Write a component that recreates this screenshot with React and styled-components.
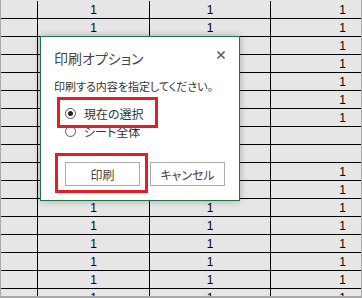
import React from "react";
import styled, { createGlobalStyle } from "styled-components";

const GlobalStyle = createGlobalStyle`
  html, body { margin: 0; padding: 0; background: #fff; }
  body { font-family: "Noto Sans CJK JP", "Noto Sans", sans-serif; }
`;

const Frame = styled.div`
  position: relative;
  width: 362px;
  height: 298px;
  box-sizing: border-box;
  border-left: 1px solid #a8a8a8;
  border-right: 1px solid #a8a8a8;
  border-bottom: 2px solid #a8a8a8;
  background: #e6e6e6;
  overflow: hidden;
`;

const Sheet = styled.div`
  display: grid;
  grid-template-columns: 37px 112px 121px 1fr;
  grid-auto-rows: 18px;
  padding-top: 1px;
`;

const Cell = styled.div`
  box-sizing: border-box;
  border-bottom: 1px solid #000;
  border-right: ${(p) => (p.$last ? "none" : "1px solid #000")};
  display: flex;
  align-items: center;
  justify-content: ${(p) => (p.$align === "right" ? "flex-end" : "center")};
  padding-right: ${(p) => (p.$align === "right" ? "15px" : "0")};
  font: 12px/1 "Liberation Sans", Arial, sans-serif;
  color: #000;
  overflow: hidden;
`;

const Dialog = styled.div`
  position: absolute;
  left: 39px;
  top: 36px;
  width: 200px;
  box-sizing: border-box;
  background: #fff;
  border: 1px solid #217346;
  box-shadow: 0 0 7px rgba(0, 0, 0, 0.28);
  padding: 11px 14px 14px 13px;
  display: flex;
  flex-direction: column;
  font-family: "Noto Sans CJK JP", "Noto Sans", sans-serif;
  font-feature-settings: "palt";
`;

const Header = styled.div`
  display: flex;
  align-items: center;
  justify-content: space-between;
  height: 20px;
`;

const Title = styled.div`
  font-size: 14px;
  line-height: 20px;
  color: #444;
`;

const CloseButton = styled.span`
  display: flex;
  width: 8px;
  height: 8px;
  margin-top: -6px;
`;

const Instruction = styled.div`
  margin-top: 10px;
  font-size: 11px;
  line-height: 16px;
  color: #333;
`;

const Options = styled.div`
  margin-top: 10px;
  display: flex;
  flex-direction: column;
  padding-left: 11px;
`;

const Option = styled.label`
  height: 18px;
  display: flex;
  align-items: center;
  gap: 8px;
  font-size: 12px;
  color: #333;
  width: fit-content;
`;

const RadioCircle = styled.span`
  width: 11px;
  height: 11px;
  box-sizing: border-box;
  border-radius: 50%;
  border: 1px solid #555;
  background: #fff;
  display: flex;
  align-items: center;
  justify-content: center;
  &::after {
    content: "";
    width: 5px;
    height: 5px;
    border-radius: 50%;
    background: ${(p) => (p.$checked ? "#222" : "transparent")};
  }
`;

const Highlight = styled.div`
  position: relative;
  width: fit-content;
  &::after {
    content: "";
    position: absolute;
    inset: ${(p) => p.$inset};
    border: 3px solid #e81c24;
    pointer-events: none;
  }
`;

const Buttons = styled.div`
  margin-top: 22px;
  display: flex;
  justify-content: flex-end;
  gap: 10px;
`;

const Button = styled.button`
  width: 75px;
  height: 24px;
  box-sizing: border-box;
  border: 1px solid #ababab;
  background: #fff;
  font-family: inherit;
  font-feature-settings: "palt";
  font-size: 12px;
  color: #444;
  padding: 0;
  display: flex;
  align-items: center;
  justify-content: center;
`;

const ROWS = 17;
const rows = Array.from({ length: ROWS }, (_, r) => {
  const gap = r === 7 || r === 8;
  const underDialog = r >= 2 && r <= 10;
  const mid = gap || underDialog ? "" : "1";
  return ["", mid, mid, gap ? "" : "1"];
});

export default function App() {
  return (
    <>
      <GlobalStyle />
      <Frame>
        <Sheet>
          {rows.map((row, r) =>
            row.map((v, c) => (
              <Cell key={`${r}-${c}`} $last={c === 3} $align={c === 3 ? "right" : "center"}>
                {v}
              </Cell>
            ))
          )}
        </Sheet>
        <Dialog>
          <Header>
            <Title>印刷オプション</Title>
            <CloseButton>
              <svg width="8" height="8" viewBox="0 0 8 8">
                <path d="M0.5 0.5 L7.5 7.5 M7.5 0.5 L0.5 7.5" stroke="#666" strokeWidth="1.6" fill="none" />
              </svg>
            </CloseButton>
          </Header>
          <Instruction>印刷する内容を指定してください。</Instruction>
          <Options>
            <Highlight $inset="-7px -14px -6px -8px">
              <Option>
                <RadioCircle $checked />
                現在の選択
              </Option>
            </Highlight>
            <Option>
              <RadioCircle />
              シート全体
            </Option>
          </Options>
          <Buttons>
            <Highlight $inset="-9px -8px -7px -10px">
              <Button>印刷</Button>
            </Highlight>
            <Button>キャンセル</Button>
          </Buttons>
        </Dialog>
      </Frame>
    </>
  );
}
